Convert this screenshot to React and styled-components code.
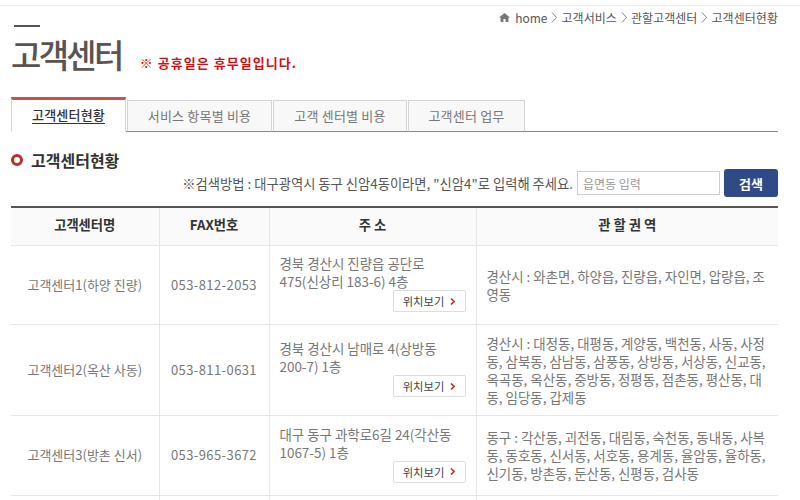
import React from "react";
import styled, { createGlobalStyle } from "styled-components";

const GlobalStyle = createGlobalStyle`
  html, body {
    margin: 0;
    padding: 0;
    height: 500px;
    overflow: hidden;
    background: #fff;
    font-family: "Noto Sans CJK KR", "Noto Sans", sans-serif;
  }
`;

const Page = styled.div`
  width: 800px;
  height: 495px;
  overflow: hidden;
  box-sizing: border-box;
  border-top: 1px solid #eee;
  margin-top: 5px;
  padding: 0 22px 0 11px;
`;

const Breadcrumb = styled.div`
  display: flex;
  justify-content: flex-end;
  align-items: center;
  height: 22px;
  font-size: 12px;
  letter-spacing: 0.05px;
  color: #555;
  gap: 3px;
`;

const Home = styled.span`
  display: flex;
  align-items: center;
  gap: 5px;
  font-size: 12px;
  letter-spacing: 0;
`;

const Crumb = styled.span`
  white-space: nowrap;
`;

const Chevron = styled.svg`
  width: 6px;
  height: 11px;
  margin: 0 1px;
`;

const Bar = styled.div`
  width: 26px;
  height: 2px;
  background: #555;
  margin: -3px 0 0 3px;
`;

const TitleRow = styled.div`
  display: flex;
  align-items: baseline;
  height: 69px;
  gap: 18px;
`;

const Title = styled.h1`
  margin: 0;
  font-size: 33px;
  line-height: 54px;
  font-weight: 500;
  letter-spacing: -2.7px;
  color: #5a5350;
`;

const Notice = styled.span`
  font-size: 13px;
  font-weight: 700;
  letter-spacing: 1.05px;
  color: #d40f14;
`;

const Tabs = styled.div`
  display: flex;
  align-items: flex-end;
  height: 35px;
  border-bottom: 1px solid #888;
  gap: 1px;
`;

const Tab = styled.div`
  box-sizing: border-box;
  display: flex;
  align-items: center;
  justify-content: center;
  width: ${(p) => p.$width}px;
  height: ${(p) => (p.$active ? 35 : 32)}px;
  margin-bottom: -1px;
  padding-bottom: 2px;
  font-size: 13px;
  letter-spacing: 0.2px;
  background: ${(p) => (p.$active ? "#fff" : "#f8f8f8")};
  color: ${(p) => (p.$active ? "#333" : "#777")};
  font-weight: ${(p) => (p.$active ? 500 : 400)};
  text-decoration: ${(p) => (p.$active ? "underline" : "none")};
  text-underline-offset: 3px;
  border: 1px solid #d4d4d4;
  border-bottom: ${(p) => (p.$active ? "1px solid #fff" : "1px solid #888")};
  border-top: ${(p) => (p.$active ? "3px solid #c9504d" : "1px solid #d4d4d4")};
`;

const SectionHead = styled.div`
  display: flex;
  align-items: center;
  gap: 8px;
  height: 19px;
  margin-top: 18px;
`;

const Ring = styled.span`
  box-sizing: border-box;
  width: 12px;
  height: 12px;
  border: 3.5px solid #b5312e;
  border-radius: 50%;
`;

const SectionTitle = styled.h2`
  margin: 0;
  font-size: 16px;
  font-weight: 700;
  color: #333;
`;

const SearchRow = styled.form`
  display: flex;
  justify-content: flex-end;
  align-items: center;
  height: 28px;
`;

const SearchHint = styled.span`
  font-size: 13.3px;
  color: #555;
  white-space: nowrap;
  margin-right: 4px;
`;

const SearchInput = styled.input`
  box-sizing: border-box;
  width: 143px;
  height: 24px;
  padding: 0 5px;
  border: 1px solid #ccc;
  font: 400 12px "Noto Sans CJK KR", sans-serif;
  margin-right: 4px;
  &::placeholder {
    color: #999;
  }
`;

const SearchButton = styled.button`
  width: 54px;
  height: 28px;
  border: 0;
  border-radius: 3px;
  background: #2f4a87;
  color: #fff;
  font: 700 13px "Noto Sans CJK KR", sans-serif;
`;

const Table = styled.table`
  width: 767px;
  margin-top: 9px;
  border-collapse: collapse;
  table-layout: fixed;
  border-top: 2px solid #555;
`;

const Th = styled.th`
  box-sizing: border-box;
  height: 38px;
  padding: 0 0 3px;
  background: #fafafa;
  border-bottom: 1px solid #e6e6e6;
  border-left: 1px solid #e6e6e6;
  font-size: 13.3px;
  font-weight: 700;
  color: #333;
  &:first-child {
    border-left: 0;
  }
`;

const Row = styled.tr`
  height: ${(p) => p.$height}px;
`;

const Td = styled.td`
  box-sizing: border-box;
  padding: 0 10px;
  border-bottom: 1px solid #e6e6e6;
  border-left: 1px solid #e6e6e6;
  font-size: 13px;
  line-height: 18px;
  color: #777;
  text-align: center;
  &:first-child {
    border-left: 0;
  }
`;

const Fax = styled(Td)`
  letter-spacing: 0.4px;
  padding: 0;
`;

const AreaCell = styled(Td)`
  font-size: 13.45px;
  text-align: left;
  word-break: break-all;
`;

const AddressCell = styled(Td)`
  font-size: 13.45px;
  text-align: left;
  word-break: keep-all;
  padding-bottom: 3px;
`;

const LocationWrap = styled.div`
  display: flex;
  justify-content: flex-end;
`;

const LocationButton = styled.button`
  display: flex;
  align-items: center;
  justify-content: center;
  gap: 6px;
  width: 73px;
  height: 22px;
  padding: 0;
  background: #fff;
  border: 1px solid #ddd;
  border-radius: 2px;
  font: 400 11.3px "Noto Sans CJK KR", sans-serif;
  color: #444;
`;

const Arrow = styled.svg`
  width: 5px;
  height: 7px;
`;

function ChevronIcon() {
  return (
    <Chevron viewBox="0 0 6 11">
      <path d="M1 0.5 L5.5 5.5 L1 10.5" fill="none" stroke="#777" strokeWidth="0.9" />
    </Chevron>
  );
}

function HomeIcon() {
  return (
    <svg width="11" height="9" viewBox="0 0 10 9" preserveAspectRatio="none">
      <path d="M5 0 L10 4.6 L8.6 4.6 L8.6 9 L6 9 L6 6 L4 6 L4 9 L1.4 9 L1.4 4.6 L0 4.6 Z" fill="#777" />
    </svg>
  );
}

const rows = [
  {
    name: "고객센터1(하양 진량)",
    fax: "053-812-2053",
    address: "경북 경산시 진량읍 공단로 475(신상리 183-6) 4층",
    area: "경산시 : 와촌면, 하양읍, 진량읍, 자인면, 압량읍, 조영동",
    height: 79,
  },
  {
    name: "고객센터2(옥산 사동)",
    fax: "053-811-0631",
    address: "경북 경산시 남매로 4(상방동 200-7) 1층",
    area: "경산시 : 대정동, 대평동, 계양동, 백천동, 사동, 사정동, 삼북동, 삼남동, 삼풍동, 상방동, 서상동, 신교동, 옥곡동, 옥산동, 중방동, 정평동, 점촌동, 평산동, 대동, 임당동, 갑제동",
    height: 91,
  },
  {
    name: "고객센터3(방촌 신서)",
    fax: "053-965-3672",
    address: "대구 동구 과학로6길 24(각산동 1067-5) 1층",
    area: "동구 : 각산동, 괴전동, 대림동, 숙천동, 동내동, 사복동, 동호동, 신서동, 서호동, 용계동, 율암동, 율하동, 신기동, 방촌동, 둔산동, 신평동, 검사동",
    height: 80,
  },
];

export default function App() {
  return (
    <>
      <GlobalStyle />
      <Page>
        <Breadcrumb>
          <Home>
            <HomeIcon />
            home
          </Home>
          <ChevronIcon />
          <Crumb>고객서비스</Crumb>
          <ChevronIcon />
          <Crumb>관할고객센터</Crumb>
          <ChevronIcon />
          <Crumb>고객센터현황</Crumb>
        </Breadcrumb>
        <Bar />
        <TitleRow>
          <Title>고객센터</Title>
          <Notice>※ 공휴일은 휴무일입니다.</Notice>
        </TitleRow>
        <Tabs>
          <Tab $active $width={115}>고객센터현황</Tab>
          <Tab $width={145}>서비스 항목별 비용</Tab>
          <Tab $width={134}>고객 센터별 비용</Tab>
          <Tab $width={117}>고객센터 업무</Tab>
        </Tabs>
        <SectionHead>
          <Ring />
          <SectionTitle>고객센터현황</SectionTitle>
        </SectionHead>
        <SearchRow>
          <SearchHint>※검색방법 : 대구광역시 동구 신암4동이라면, "신암4"로 입력해 주세요.</SearchHint>
          <SearchInput placeholder="읍면동 입력" />
          <SearchButton type="button">검색</SearchButton>
        </SearchRow>
        <Table>
          <colgroup>
            <col width="148" />
            <col width="110" />
            <col width="207" />
            <col width="302" />
          </colgroup>
          <thead>
            <tr>
              <Th>고객센터명</Th>
              <Th>FAX번호</Th>
              <Th>주 소</Th>
              <Th>관 할 권 역</Th>
            </tr>
          </thead>
          <tbody>
            {rows.map((row) => (
              <Row key={row.fax} $height={row.height}>
                <Td>{row.name}</Td>
                <Fax>{row.fax}</Fax>
                <AddressCell>
                  {row.address}
                  <LocationWrap>
                    <LocationButton type="button">
                      위치보기
                      <Arrow viewBox="0 0 5 7">
                        <path d="M1 0.5 L4 3.5 L1 6.5" fill="none" stroke="#c0302c" strokeWidth="1.6" />
                      </Arrow>
                    </LocationButton>
                  </LocationWrap>
                </AddressCell>
                <AreaCell>{row.area}</AreaCell>
              </Row>
            ))}
            <Row $height={40}>
              <Td />
              <Td />
              <Td />
              <Td />
            </Row>
          </tbody>
        </Table>
      </Page>
    </>
  );
}
